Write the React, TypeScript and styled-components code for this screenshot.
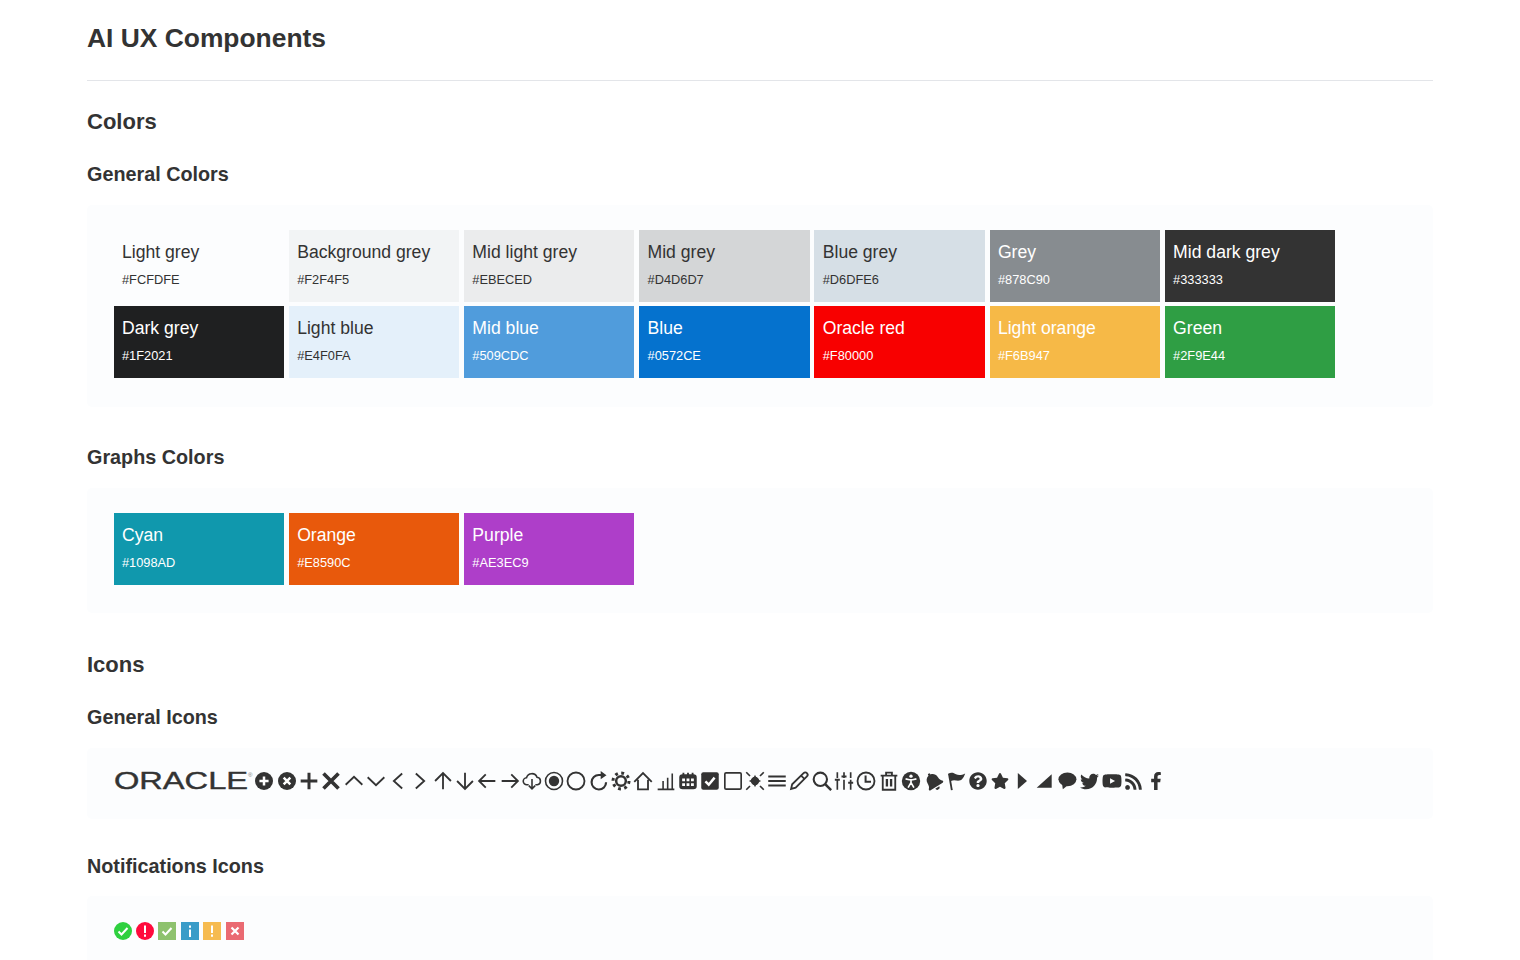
import { ReactNode } from 'react'
import styled, { createGlobalStyle } from 'styled-components'
import { FaFacebookF, FaQuestionCircle, FaRss, FaStar, FaTwitter, FaYoutube, FaBell } from 'react-icons/fa'

const GlobalStyle = createGlobalStyle`
  html, body {
    margin: 0;
    background: #fff;
    overflow: hidden;
  }
  body {
    font-family: 'Liberation Sans', Arial, sans-serif;
    color: #333;
  }
`

const Page = styled.div`
  padding: 22px 87px 0;
  height: 960px;
  box-sizing: border-box;
  overflow: hidden;
`

const Title = styled.h1`
  margin: 0;
  padding-bottom: 26px;
  font-size: 26.4px;
  line-height: 32px;
  font-weight: 700;
  border-bottom: 1.5px solid #e3e5e9;
`

const SectionTitle = styled.h2<{ $top: number }>`
  margin: ${(p) => p.$top}px 0 0;
  font-size: 22px;
  line-height: 26px;
  font-weight: 700;
`

const SubTitle = styled.h3<{ $top: number; $bottom?: number }>`
  margin: ${(p) => p.$top}px 0 ${(p) => p.$bottom ?? 19}px;
  font-size: 19.8px;
  line-height: 24px;
  font-weight: 700;
`

const Panel = styled.div<{ $top?: number; $bottom?: number }>`
  background: #fcfdfe;
  border-radius: 5px;
  padding: ${(p) => p.$top ?? 25}px 26.6px ${(p) => p.$bottom ?? 28}px;
`

const SwatchGrid = styled.div`
  display: grid;
  grid-template-columns: repeat(7, 170.4px);
  gap: 4px 4.8px;
`

const Swatch = styled.div<{ $bg: string; $light?: boolean }>`
  height: 72px;
  padding: 11px 8.4px 0;
  box-sizing: border-box;
  background: ${(p) => p.$bg};
  color: ${(p) => (p.$light ? '#fff' : '#333')};
`

const SwatchName = styled.div`
  font-size: 17.6px;
  line-height: 22px;
`

const SwatchHex = styled.div`
  margin-top: 8px;
  font-size: 12.8px;
  line-height: 18px;
`

const IconRow = styled.div`
  display: flex;
  align-items: center;
  height: 20px;
  color: #333;
`

const LogoSlot = styled.div`
  width: 139.6px;
  height: 20px;
  flex: none;
`

const IconSlot = styled.div`
  width: 22.3px;
  height: 20px;
  flex: none;
  display: flex;
  align-items: center;
  justify-content: center;
`

const NotifyRow = styled.div`
  display: flex;
  align-items: center;
  gap: 4.4px;
  height: 18px;
`

const general: { name: string; hex: string; light?: boolean }[] = [
  { name: 'Light grey', hex: '#FCFDFE' },
  { name: 'Background grey', hex: '#F2F4F5' },
  { name: 'Mid light grey', hex: '#EBECED' },
  { name: 'Mid grey', hex: '#D4D6D7' },
  { name: 'Blue grey', hex: '#D6DFE6' },
  { name: 'Grey', hex: '#878C90', light: true },
  { name: 'Mid dark grey', hex: '#333333', light: true },
  { name: 'Dark grey', hex: '#1F2021', light: true },
  { name: 'Light blue', hex: '#E4F0FA' },
  { name: 'Mid blue', hex: '#509CDC', light: true },
  { name: 'Blue', hex: '#0572CE', light: true },
  { name: 'Oracle red', hex: '#F80000', light: true },
  { name: 'Light orange', hex: '#F6B947', light: true },
  { name: 'Green', hex: '#2F9E44', light: true },
]

const graphs = [
  { name: 'Cyan', hex: '#1098AD', light: true },
  { name: 'Orange', hex: '#E8590C', light: true },
  { name: 'Purple', hex: '#AE3EC9', light: true },
]

const Glyph = ({ children, size = 20 }: { children: ReactNode; size?: number }) => (
  <svg width={size} height={size} viewBox="0 0 24 24" fill="none" stroke="#333" strokeWidth="2.2" style={{ flex: 'none' }}>
    {children}
  </svg>
)

const solid = { fill: '#333', stroke: 'none' }

const icons: ReactNode[] = [
  <Glyph><circle cx="12" cy="12" r="10.8" {...solid} /><path d="M12 6.5v11M6.5 12h11" stroke="#fff" strokeWidth="3" /></Glyph>,
  <Glyph><circle cx="12" cy="12" r="10.8" {...solid} /><path d="M8 8l8 8M16 8l-8 8" stroke="#fff" strokeWidth="3" /></Glyph>,
  <Glyph><path d="M12 2v20M2 12h20" strokeWidth="3.6" /></Glyph>,
  <Glyph><path d="M3 3l18 18M21 3L3 21" strokeWidth="4.4" /></Glyph>,
  <Glyph><path d="M2 16.5L12 7l10 9.5" /></Glyph>,
  <Glyph><path d="M2 7.5L12 17l10-9.5" /></Glyph>,
  <Glyph><path d="M17 3l-10 9 10 9" /></Glyph>,
  <Glyph><path d="M7 3l10 9-10 9" /></Glyph>,
  <Glyph><path d="M12 22V2.5M2.5 12L12 2.5l9.5 9.5" /></Glyph>,
  <Glyph><path d="M12 2v19.5M2.5 12l9.5 9.5 9.5-9.5" /></Glyph>,
  <Glyph><path d="M22 12H2.5M10.5 4l-8 8 8 8" /></Glyph>,
  <Glyph><path d="M2 12h19.5M13.5 4l8 8-8 8" /></Glyph>,
  <Glyph><path d="M8 16.5H6a4.2 4.2 0 0 1-.6-8.4A6.6 6.6 0 0 1 18 7.6a4.5 4.5 0 0 1 .5 8.9H16" strokeWidth="1.9" /><path d="M12 9.5V21.5M8.2 17.5l3.8 4 3.8-4" strokeWidth="1.9" /></Glyph>,
  <Glyph><circle cx="12" cy="12" r="10.2" strokeWidth="1.9" /><circle cx="12" cy="12" r="6.2" {...solid} /></Glyph>,
  <Glyph><circle cx="12" cy="12" r="10.2" /></Glyph>,
  <Glyph><path d="M20.5 13.5A8.7 8.7 0 1 1 12 4.8h3" strokeWidth="2.6" /><path d="M14 0l7 5-7 5z" {...solid} /></Glyph>,
  <Glyph><circle cx="12" cy="12" r="5.8" strokeWidth="3" /><circle cx="12" cy="12" r="9.6" strokeWidth="3.6" strokeDasharray="3.4 4.14" /></Glyph>,
  <Glyph><path d="M1.5 13L12 2.5 22.5 13M6 10.5V22h12V10.5" strokeWidth="2.2" /></Glyph>,
  <Glyph><path d="M2 22h20M8.5 21V12M14 21V8M19.5 21V3" strokeWidth="1.9" /></Glyph>,
  <Glyph><rect x="1.5" y="4" width="21" height="18" rx="4" {...solid} /><path d="M6.5 2v4M12 2v4M17.5 2v4" strokeWidth="2.2" /><path d="M5 9h3.4v3.4H5zM10.3 9h3.4v3.4h-3.4zM15.6 9H19v3.4h-3.4zM5 14.6h3.4V18H5zM10.3 14.6h3.4V18h-3.4zM15.6 14.6H19V18h-3.4z" fill="#fff" stroke="none" /></Glyph>,
  <Glyph><rect x="1.5" y="1.5" width="21" height="21" rx="2.5" {...solid} /><path d="M6.5 12.5l4 4 7-8.5" stroke="#fff" strokeWidth="3" /></Glyph>,
  <Glyph><rect x="2.2" y="2.2" width="19.6" height="19.6" rx="1.5" strokeWidth="2" /></Glyph>,
  <Glyph><circle cx="12" cy="12" r="5" {...solid} /><path d="M12 4.5l2.4 5 5 2.5-5 2.5-2.4 5-2.4-5-5-2.5 5-2.5z" {...solid} /><path d="M1.5 1.5L6 6M22.5 1.5L18 6M1.5 22.5L6 18M22.5 22.5L18 18" strokeWidth="2" /></Glyph>,
  <Glyph><path d="M1.5 6.5h21M1.5 12h21M1.5 17.5h21" strokeWidth="2.4" /></Glyph>,
  <Glyph><path d="M2.5 21.5l1.3-5.6L17.5 2.5a2.8 2.8 0 0 1 4 4L8 20z" strokeWidth="2.2" /><path d="M14.5 5.5l4 4" strokeWidth="2" /></Glyph>,
  <Glyph><circle cx="10" cy="10" r="8" strokeWidth="2.5" /><path d="M15.8 15.8L23 23" strokeWidth="3" /></Glyph>,
  <Glyph><path d="M4 1.5v21M12 1.5v21M20 1.5v21" strokeWidth="2" strokeDasharray="7 2 13" /><path d="M1 10.5h6M9 6.5h6M17 14h6" strokeWidth="2.4" /></Glyph>,
  <Glyph><circle cx="12" cy="12" r="10.2" strokeWidth="2.2" /><path d="M11.5 5.5V13H18" strokeWidth="2.4" /></Glyph>,
  <Glyph><path d="M2 5.5h20M8.5 5V2h7v3" strokeWidth="2.2" /><path d="M4.5 6v16.5h15V6" strokeWidth="2.2" /><path d="M9.5 9.5v9M14.5 9.5v9" strokeWidth="2.8" /></Glyph>,
  <Glyph><circle cx="12" cy="12" r="11" {...solid} /><circle cx="12" cy="6.2" r="2" fill="#fff" stroke="none" /><path d="M5.5 9.5l4.5 1 4 0 4.5-1M12 10.5v3.5M12 14l-3.5 6M12 14l3.5 6" stroke="#fff" strokeWidth="2" /></Glyph>,
  <FaBell size={19} style={{ transform: 'rotate(-32deg)', flex: 'none' }} />,
  <Glyph><path d="M7 23L3.5 3" strokeWidth="2.2" /><path d="M3 4c3-3 6-2 9 0 3 1.5 7 1 11-1-1 3-3 8-7 8.500-3.500.5-6-1.500-10 .5z" {...solid} /></Glyph>,
  <FaQuestionCircle size={18} />,
  <FaStar size={18} />,
  <Glyph><path d="M7 2.500l11 9.500-11 9.500z" {...solid} /></Glyph>,
  <Glyph><path d="M20 4v16H2z" {...solid} /></Glyph>,
  <Glyph><ellipse cx="12.500" cy="10" rx="10.800" ry="8.300" {...solid} /><path d="M6 15l1 7 6-5z" {...solid} /></Glyph>,
  <FaTwitter size={19} />,
  <FaYoutube size={20} />,
  <FaRss size={19} />,
  <FaFacebookF size={18} />,
]

const Mark = ({ bg, round, children }: { bg: string; round?: boolean; children: ReactNode }) => (
  <svg width="18" height="18" viewBox="0 0 18 18" fill="none" stroke="#fff" strokeWidth="2">
    {round ? <circle cx="9" cy="9" r="9" fill={bg} stroke="none" /> : <rect width="18" height="18" fill={bg} stroke="none" />}
    {children}
  </svg>
)

const OracleLogo = () => (
  <svg width="140" height="24" viewBox="0 0 140 24" style={{ display: 'block', marginTop: '-2px' }}>
    <text x="0" y="20" fontFamily="'Liberation Sans', Arial, sans-serif" fontSize="23" fill="#333" stroke="#333" strokeWidth="0.4" textLength="134" lengthAdjust="spacingAndGlyphs">ORACLE</text>
    <text x="134" y="8" fontFamily="'Liberation Sans', Arial, sans-serif" fontSize="6" fill="#777">®</text>
  </svg>
)

export default function App() {
  return (
    <Page>
      <GlobalStyle />
      <Title>AI UX Components</Title>

      <SectionTitle $top={28}>Colors</SectionTitle>
      <SubTitle $top={27}>General Colors</SubTitle>
      <Panel $bottom={29}>
        <SwatchGrid>
          {general.map((c) => (
            <Swatch key={c.hex} $bg={c.hex} $light={c.light}>
              <SwatchName>{c.name}</SwatchName>
              <SwatchHex>{c.hex}</SwatchHex>
            </Swatch>
          ))}
        </SwatchGrid>
      </Panel>

      <SubTitle $top={38}>Graphs Colors</SubTitle>
      <Panel>
        <SwatchGrid>
          {graphs.map((c) => (
            <Swatch key={c.hex} $bg={c.hex} $light={c.light}>
              <SwatchName>{c.name}</SwatchName>
              <SwatchHex>{c.hex}</SwatchHex>
            </Swatch>
          ))}
        </SwatchGrid>
      </Panel>

      <SectionTitle $top={39}>Icons</SectionTitle>
      <SubTitle $top={27}>General Icons</SubTitle>
      <Panel $top={23} $bottom={28}>
        <IconRow>
          <LogoSlot><OracleLogo /></LogoSlot>
          {icons.map((icon, index) => (
            <IconSlot key={`icon-${index}`}>{icon}</IconSlot>
          ))}
        </IconRow>
      </Panel>

      <SubTitle $top={35} $bottom={18}>Notifications Icons</SubTitle>
      <Panel $top={26}>
        <NotifyRow>
          <Mark bg="#2fd03f" round><path d="M4.500 9.500l3 3 6-6.500" /></Mark>
          <Mark bg="#ff0a3c" round><path d="M9 3.500v7.500M9 12.500v2.200" /></Mark>
          <Mark bg="#8ec26e"><path d="M4.500 9.500l3 3 6-6.500" /></Mark>
          <Mark bg="#3a9cc8"><path d="M9 7.500v7.500M9 3.500v2.200" /></Mark>
          <Mark bg="#f6bb50"><path d="M9 3.500v7.500M9 12.500v2.200" /></Mark>
          <Mark bg="#ea6a72"><path d="M5.500 5.500l7 7M12.500 5.500l-7 7" strokeWidth="2.2" /></Mark>
        </NotifyRow>
      </Panel>
    </Page>
  )
}
